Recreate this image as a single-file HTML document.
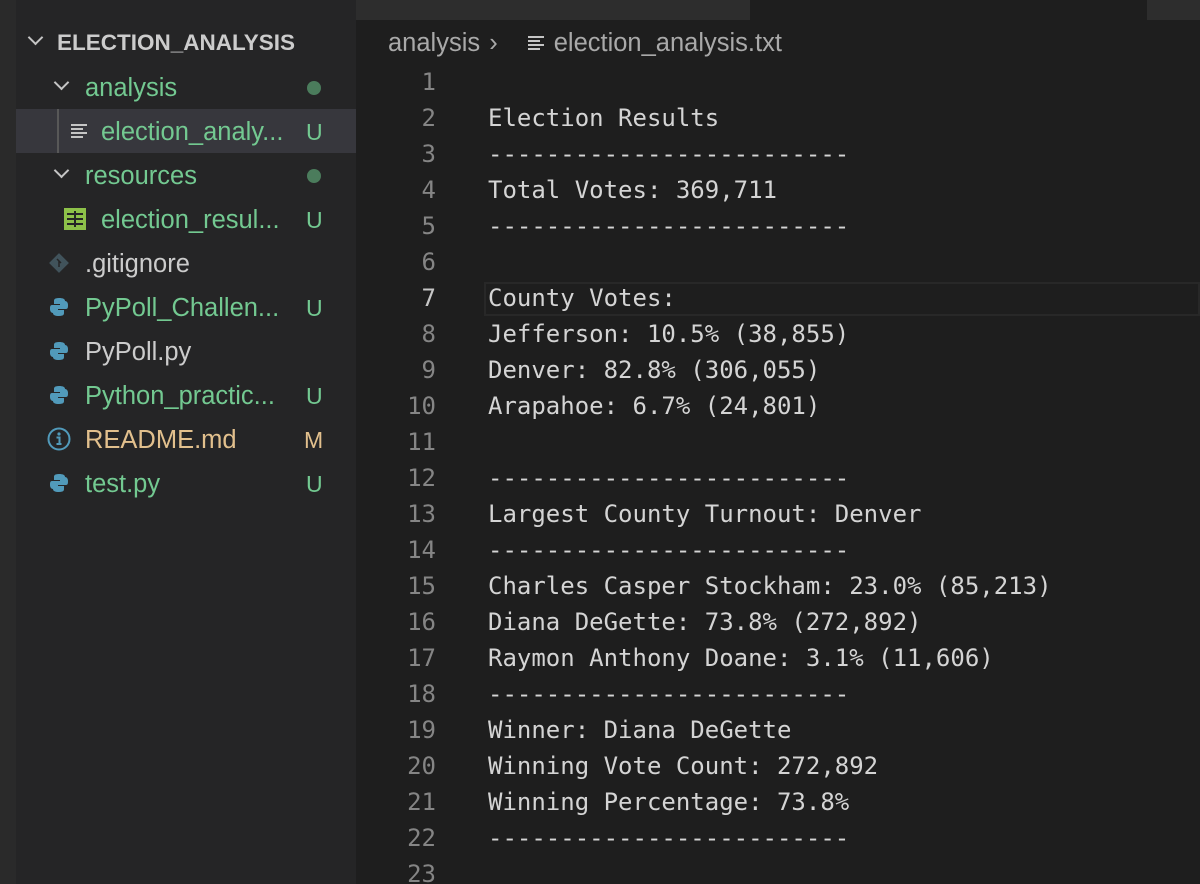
<!DOCTYPE html>
<html><head><meta charset="utf-8"><style>
*{margin:0;padding:0;box-sizing:border-box}
html,body{width:1200px;height:884px;overflow:hidden}
body{background:#1e1e1e;position:relative;font-family:"Liberation Sans",sans-serif}
.strip{position:absolute;left:0;top:0;width:16px;height:884px;background:#2a2a2a}
.side{position:absolute;left:16px;top:0;width:340px;height:884px;background:#252526}
.row{position:absolute;left:0;width:340px;height:44px;font-size:25.5px;line-height:46px;white-space:nowrap}
.g{color:#73c991}.w{color:#cccccc}.y{color:#e2c08d}
.badge{position:absolute;left:290px;top:0;font-size:23px}
.dot{position:absolute;left:291px;top:16px;width:14px;height:14px;border-radius:50%;background:#4b7c5c}
.chev{position:absolute;width:11px;height:11px;border-right:2px solid #c5c5c5;border-bottom:2px solid #c5c5c5;transform:rotate(45deg)}
.tab{position:absolute;top:0;height:20px;background:#2d2d2d}
.crumb{position:absolute;left:388px;top:29px;font-size:25.5px;color:#a9a9a9;white-space:nowrap}
.code{position:absolute;top:64px;left:0;width:1200px;font-family:"DejaVu Sans Mono","Liberation Mono",monospace;font-size:24px}
.ln{position:absolute;height:36px;line-height:36px;white-space:pre}
.num{left:356px;width:80px;text-align:right;color:#858585}
.txt{left:488px;color:#d4d4d4}
.cur{position:absolute;left:484px;top:282px;width:716px;height:34px;border:2px solid #282828}
</style></head><body>
<div class="strip"></div>
<div class="side">
 <div class="row" style="top:20px"><div class="chev" style="left:14px;top:12px"></div><span style="position:absolute;left:41px;color:#cccccc;font-weight:bold;font-size:22.5px">ELECTION_ANALYSIS</span></div>
 <div class="row" style="top:65px"><div class="chev" style="left:40px;top:12px"></div><span class="g" style="position:absolute;left:69px">analysis</span><div class="dot"></div></div>
 <div class="row" style="top:109px;background:#37373d"><div style="position:absolute;left:41px;top:0;width:2px;height:44px;background:#585858"></div>
  <svg style="position:absolute;left:55px;top:14px" width="18" height="16"><g stroke="#c5c5c5" stroke-width="2"><line x1="0" y1="2" x2="16" y2="2"/><line x1="0" y1="6" x2="12" y2="6"/><line x1="0" y1="10" x2="16" y2="10"/><line x1="0" y1="14" x2="12" y2="14"/></g></svg>
  <span class="g" style="position:absolute;left:85px">election_analy...</span><span class="badge g">U</span></div>
 <div class="row" style="top:153px"><div class="chev" style="left:40px;top:12px"></div><span class="g" style="position:absolute;left:69px">resources</span><div class="dot"></div></div>
 <div class="row" style="top:197px"><svg style="position:absolute;left:48px;top:11px" width="22" height="22"><rect x="0" y="0" width="22" height="22" fill="#8dc149"/><g stroke="#252526" stroke-width="2"><line x1="3" y1="6" x2="19" y2="6"/><line x1="3" y1="11" x2="19" y2="11"/><line x1="3" y1="16" x2="19" y2="16"/><line x1="11" y1="3" x2="11" y2="19"/></g></svg><span class="g" style="position:absolute;left:85px">election_resul...</span><span class="badge g">U</span></div>
 <div class="row" style="top:241px"><svg style="position:absolute;left:32px;top:11px" width="22" height="22"><rect x="4" y="4" width="14" height="14" transform="rotate(45 11 11)" fill="#41535b"/><path d="M9 7 L13 11 M11 9 L11 15" stroke="#252526" stroke-width="1.5"/></svg><span class="w" style="position:absolute;left:69px">.gitignore</span></div>
 <div class="row" style="top:285px"><svg style="position:absolute;left:33px;top:12px" width="20" height="20"><path d="M10 1C5 1 5 3 5 4v3h6v1H3C1 8 1 10 1 12s1 4 3 4h2v-3c0-2 1-3 3-3h5c1 0 2-1 2-2V4c0-2-2-3-6-3z" fill="#519aba"/><path d="M10 19c5 0 5-2 5-3v-3H9v-1h8c2 0 2-2 2-4s-1-4-3-4h-2v3c0 2-1 3-3 3H6c-1 0-2 1-2 2v4c0 2 2 3 6 3z" fill="#519aba"/></svg><span class="g" style="position:absolute;left:69px">PyPoll_Challen...</span><span class="badge g">U</span></div>
 <div class="row" style="top:329px"><svg style="position:absolute;left:33px;top:12px" width="20" height="20"><path d="M10 1C5 1 5 3 5 4v3h6v1H3C1 8 1 10 1 12s1 4 3 4h2v-3c0-2 1-3 3-3h5c1 0 2-1 2-2V4c0-2-2-3-6-3z" fill="#519aba"/><path d="M10 19c5 0 5-2 5-3v-3H9v-1h8c2 0 2-2 2-4s-1-4-3-4h-2v3c0 2-1 3-3 3H6c-1 0-2 1-2 2v4c0 2 2 3 6 3z" fill="#519aba"/></svg><span class="w" style="position:absolute;left:69px">PyPoll.py</span></div>
 <div class="row" style="top:373px"><svg style="position:absolute;left:33px;top:12px" width="20" height="20"><path d="M10 1C5 1 5 3 5 4v3h6v1H3C1 8 1 10 1 12s1 4 3 4h2v-3c0-2 1-3 3-3h5c1 0 2-1 2-2V4c0-2-2-3-6-3z" fill="#519aba"/><path d="M10 19c5 0 5-2 5-3v-3H9v-1h8c2 0 2-2 2-4s-1-4-3-4h-2v3c0 2-1 3-3 3H6c-1 0-2 1-2 2v4c0 2 2 3 6 3z" fill="#519aba"/></svg><span class="g" style="position:absolute;left:69px">Python_practic...</span><span class="badge g">U</span></div>
 <div class="row" style="top:417px"><svg style="position:absolute;left:31px;top:10px" width="24" height="24"><circle cx="12" cy="12" r="10.5" fill="none" stroke="#519aba" stroke-width="2"/><circle cx="12" cy="7" r="1.6" fill="#519aba"/><path d="M9.5 10.5h3v6.5M9.5 17h5" stroke="#519aba" stroke-width="2" fill="none"/></svg><span class="y" style="position:absolute;left:69px">README.md</span><span class="badge y" style="left:288px">M</span></div>
 <div class="row" style="top:461px"><svg style="position:absolute;left:33px;top:12px" width="20" height="20"><path d="M10 1C5 1 5 3 5 4v3h6v1H3C1 8 1 10 1 12s1 4 3 4h2v-3c0-2 1-3 3-3h5c1 0 2-1 2-2V4c0-2-2-3-6-3z" fill="#519aba"/><path d="M10 19c5 0 5-2 5-3v-3H9v-1h8c2 0 2-2 2-4s-1-4-3-4h-2v3c0 2-1 3-3 3H6c-1 0-2 1-2 2v4c0 2 2 3 6 3z" fill="#519aba"/></svg><span class="g" style="position:absolute;left:69px">test.py</span><span class="badge g">U</span></div>
</div>
<div class="tab" style="left:356px;width:394px"></div>
<div class="tab" style="left:1147px;width:53px"></div>
<div class="crumb">analysis <span style="margin:0 4px 0 2px">&#x203A;</span><svg width="18" height="16" style="margin:0 8px 0 26px"><g stroke="#c5c5c5" stroke-width="2"><line x1="0" y1="2" x2="16" y2="2"/><line x1="0" y1="6" x2="12" y2="6"/><line x1="0" y1="10" x2="16" y2="10"/><line x1="0" y1="14" x2="12" y2="14"/></g></svg>election_analysis.txt</div>
<div class="cur"></div>
<div class="code" id="c"></div>
<script>
var L=["","Election Results","-------------------------","Total Votes: 369,711","-------------------------","","County Votes:","Jefferson: 10.5% (38,855)","Denver: 82.8% (306,055)","Arapahoe: 6.7% (24,801)","","-------------------------","Largest County Turnout: Denver","-------------------------","Charles Casper Stockham: 23.0% (85,213)","Diana DeGette: 73.8% (272,892)","Raymon Anthony Doane: 3.1% (11,606)","-------------------------","Winner: Diana DeGette","Winning Vote Count: 272,892","Winning Percentage: 73.8%","-------------------------",""];
var h="";L.forEach(function(t,i){var y=i*36;h+='<div class="ln num" style="top:'+y+'px'+(i==6?';color:#c6c6c6':'')+'">'+(i+1)+'</div><div class="ln txt" style="top:'+y+'px">'+t+'</div>';});
document.getElementById("c").innerHTML=h;
</script>
</body></html>
